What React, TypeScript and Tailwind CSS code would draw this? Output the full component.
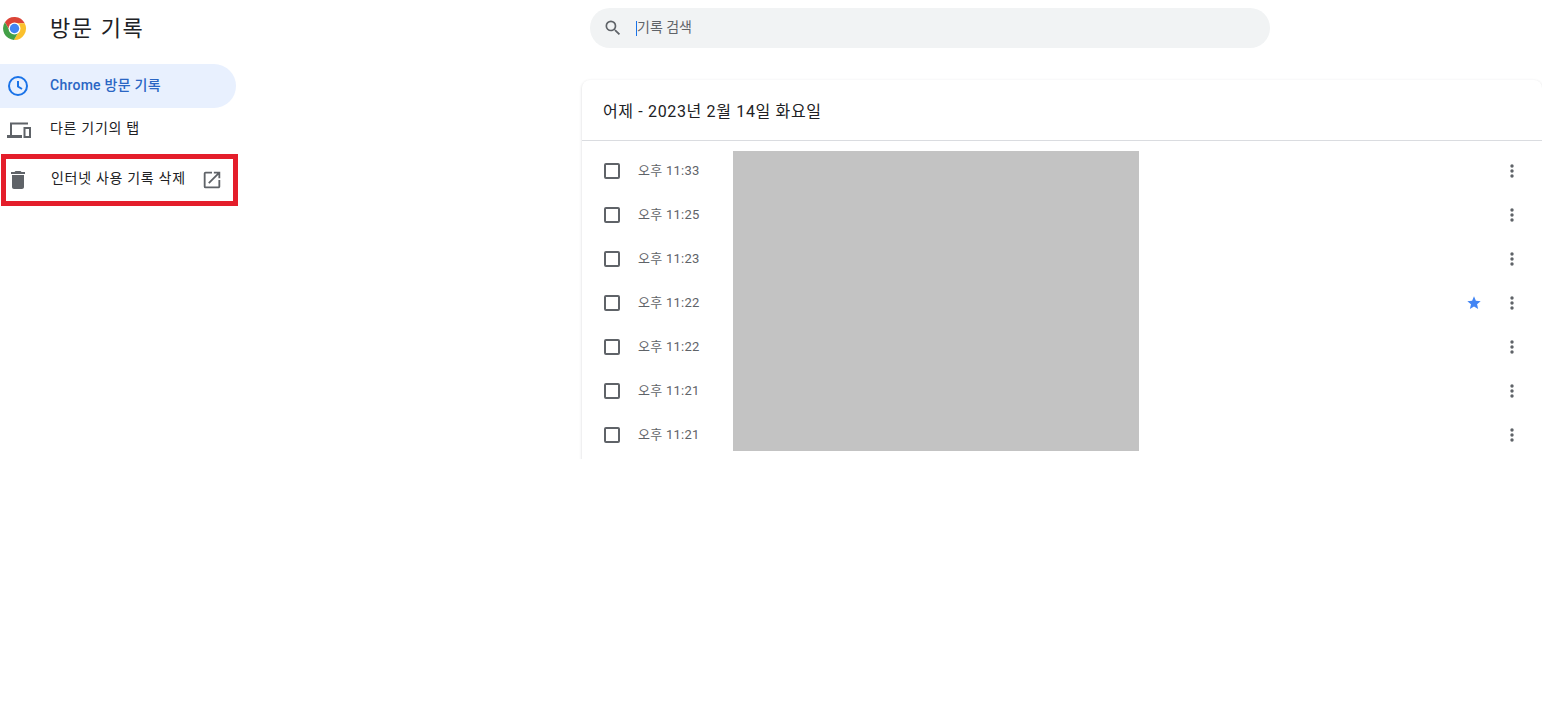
const rows = [
  { time: "오후 11:33" },
  { time: "오후 11:25" },
  { time: "오후 11:23" },
  { time: "오후 11:22", starred: true },
  { time: "오후 11:22" },
  { time: "오후 11:21" },
  { time: "오후 11:21" },
];

function ChromeLogo() {
  return (
    <svg width="25" height="25" viewBox="0 0 48 48">
      <path fill="#db4437" d="M43.6 14A22 22 0 0 0 5.54 12.03L15.34 29A10 10 0 0 1 24 14Z" />
      <path fill="#fbc02d" d="M22.86 45.97A22 22 0 0 0 43.6 14L24 14A10 10 0 0 1 32.66 29Z" />
      <path fill="#43a047" d="M5.54 12.03A22 22 0 0 0 22.86 45.97L32.66 29A10 10 0 0 1 15.34 29Z" />
      <circle cx="24" cy="24" r="11.5" fill="#fff" />
      <circle cx="24" cy="24" r="9" fill="#4285f4" />
    </svg>
  );
}

function Kebab() {
  return (
    <svg width="24" height="24" viewBox="0 0 24 24" fill="#5f6368">
      <circle cx="12" cy="7" r="1.7" />
      <circle cx="12" cy="12" r="1.7" />
      <circle cx="12" cy="17" r="1.7" />
    </svg>
  );
}

export default function App() {
  return (
    <div className="flex h-[720px] bg-white overflow-hidden text-[13px] text-[#202124] font-['Roboto','Noto_Sans_CJK_KR',sans-serif]">
      <aside className="w-[240px] shrink-0">
        <div className="flex items-center h-[56px] pl-[2px] pt-[1px]">
          <ChromeLogo />
          <h1 className="ml-[23px] text-[22px] tracking-[1.6px] leading-none font-normal">방문 기록</h1>
        </div>
        <nav className="mt-2 text-[14px] tracking-[0.7px]">
          <div className="flex items-center h-[44px] w-[236px] rounded-r-full bg-[#e8f0fe] pl-[6px] text-[#2a66c4] font-medium">
            <svg width="24" height="24" viewBox="0 0 24 24" fill="none" stroke="#1a73e8" strokeWidth="2">
              <circle cx="12" cy="12" r="9" />
              <path d="M12 7v5.500l4 2.500" />
            </svg>
            <span className="ml-[20px] pb-[2px] tracking-[0.25px]">Chrome 방문 기록</span>
          </div>
          <div className="flex items-center h-[44px] pl-[6px]">
            <svg width="26" height="24" viewBox="0 0 26 24" fill="#5f6368">
              <path d="M4 4.500h18v2H6V17h10v3H1v-3h3V4.500z" />
              <path fillRule="evenodd" d="M17.500 9H25v11h-7.500V9zm2 2v7H23v-7h-3.500z" />
            </svg>
            <span className="ml-[18px] pb-[4px]">다른 기기의 탭</span>
          </div>
          <div className="flex items-center h-[52px] w-[237px] ml-[1px] mt-[2px] border-[5px] border-[#e41e2b]">
            <svg width="24" height="24" viewBox="0 0 24 24" fill="#5f6368">
              <path d="M6 19c0 1.100.9 2 2 2h8c1.100 0 2-.9 2-2V7H6v12zM19 4h-3.500l-1-1h-5l-1 1H5v2h14V4z" />
            </svg>
            <span className="ml-[21px] pb-[3px]">인터넷 사용 기록 삭제</span>
            <svg className="ml-[15px]" width="22" height="22" viewBox="0 0 24 24" fill="#5f6368">
              <path d="M19 19H5V5h7V3H5a2 2 0 0 0-2 2v14a2 2 0 0 0 2 2h14c1.100 0 2-.9 2-2v-7h-2v7zM14 3v2h3.600l-9.800 9.800 1.400 1.400L19 6.400V10h2V3h-7z" />
            </svg>
          </div>
        </nav>
      </aside>

      <main className="flex-1 min-w-0 pl-[338px]">
        <div className="pt-2 pl-3">
          <div className="flex items-center h-[40px] w-[680px] rounded-full bg-[#f1f3f4] pl-[13px] text-[#5f6368]">
            <svg width="20" height="20" viewBox="0 0 24 24" fill="#5f6368">
              <path d="M15.5 14h-.79l-.28-.27A6.471 6.471 0 0 0 16 9.5 6.5 6.5 0 1 0 9.5 16c1.610 0 3.090-.59 4.230-1.570l.27.28v.79l5 4.990L20.490 19l-4.990-5zm-6 0C7.010 14 5 11.990 5 9.500S7.010 5 9.500 5 14 7.010 14 9.500 11.990 14 9.500 14z" />
            </svg>
            <span className="ml-[13px] h-[15px] w-px bg-[#1a73e8]" />
            <span className="pb-[2px] text-[14px] leading-none">기록 검색</span>
          </div>
        </div>
        {/* wrapper clips the card's bottom, shadow stays on the other sides */}
        <div className="mt-[28px] h-[383px] overflow-hidden pl-1 pt-1">
          <section className="relative h-[500px] rounded-t-lg bg-white shadow-[0_1px_3px_rgba(60,64,67,0.22)]">
            <h2 className="flex items-center h-[61px] pl-[21px] pt-[3px] border-b border-[#dadce0] text-[16px] tracking-[0.65px] font-normal">
              어제 - 2023년 2월 14일 화요일
            </h2>
            <ul className="pt-[8px]">
              {rows.map((row, i) => (
                <li key={i} className="flex items-center h-[44px] pl-[22px] pr-[18px]">
                  <span className="h-4 w-4 rounded-[2px] border-2 border-[#5f6368]" />
                  <span className="ml-[18px] tracking-[0.25px] text-[#5f6368]">{row.time}</span>
                  <span className="flex-1" />
                  {row.starred && (
                    <svg className="mr-[18px]" width="16" height="16" viewBox="0 0 24 24" fill="#4285f4">
                      <path d="M12 17.300l6.200 3.700-1.600-7L22 9.200l-7.200-.6L12 2 9.200 8.600 2 9.200 7.500 14l-1.700 7z" />
                    </svg>
                  )}
                  <Kebab />
                </li>
              ))}
            </ul>
            {/* redacted titles */}
            <div className="absolute left-[151px] top-[71px] h-[300px] w-[406px] bg-[#c3c3c3]" />
          </section>
        </div>
      </main>
    </div>
  );
}
